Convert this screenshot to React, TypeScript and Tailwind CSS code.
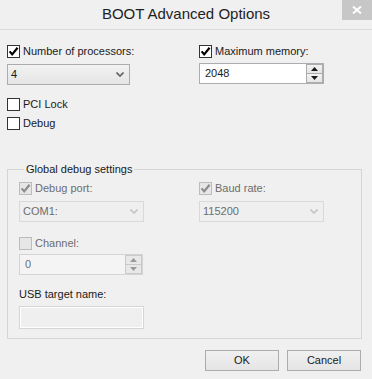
import React from "react";

function Box({ checked, disabled }: { checked?: boolean; disabled?: boolean }) {
  return (
    <span
      className={
        disabled
          ? "w-[13px] h-[13px] border border-[#bcbcbc] bg-[#e6e6e6] flex items-center justify-center shrink-0"
          : "w-[13px] h-[13px] border border-[#333333] bg-white flex items-center justify-center shrink-0"
      }
    >
      {checked && (
        <svg width="11" height="11" viewBox="0 0 11 11">
          <path
            d="M1.6 5.4 L4.2 8.4 L9.6 1.8"
            fill="none"
            stroke={disabled ? "#8c8c8c" : "#000"}
            strokeWidth="2.2"
          />
        </svg>
      )}
    </span>
  );
}

function CheckRow({ label, checked, disabled }: { label: string; checked?: boolean; disabled?: boolean }) {
  return (
    <div className="flex items-center gap-[3px] h-[13px]">
      <Box checked={checked} disabled={disabled} />
      <span className={disabled ? "text-[#6d6d6d] leading-[13px]" : "text-[#1a1a1a] leading-[13px]"}>{label}</span>
    </div>
  );
}

function Chevron({ color }: { color: string }) {
  return (
    <svg width="8" height="5" viewBox="0 0 8 5">
      <path d="M0.5 0.5 L4 4 L7.5 0.5" fill="none" stroke={color} strokeWidth="1.6" />
    </svg>
  );
}

function Select({ value, disabled, width }: { value: string; disabled?: boolean; width: string }) {
  return (
    <div
      className={
        (disabled
          ? "border-[#d9d9d9] bg-[#efefef] text-[#6d6d6d] "
          : "border-[#acacac] bg-gradient-to-b from-[#f2f2f2] to-[#e5e5e5] text-[#1a1a1a] ") +
        "h-[21px] border flex items-center justify-between pl-[3px] pr-[5px] " +
        width
      }
    >
      <span className="leading-[13px]">{value}</span>
      <Chevron color={disabled ? "#c4c4c4" : "#606060"} />
    </div>
  );
}

function Tri({ up, color }: { up?: boolean; color: string }) {
  return (
    <svg width="7" height="4" viewBox="0 0 7 4">
      <path d={up ? "M0 4 L3.5 0 L7 4 Z" : "M0 0 L3.5 4 L7 0 Z"} fill={color} />
    </svg>
  );
}

function Spin({ value, disabled, width }: { value: string; disabled?: boolean; width: string }) {
  return (
    <div
      className={
        (disabled ? "border-[#d4d4d4] bg-[#f4f4f4] text-[#6d6d6d] " : "border-[#abadb3] bg-white text-[#1a1a1a] ") +
        "h-[21px] border flex items-center justify-between " +
        width
      }
    >
      <span className="pl-[5px] leading-[13px]">{value}</span>
      <div className="flex flex-col h-full w-[17px]">
        <div
          className={
            disabled
              ? "flex-1 border border-[#c9c9c9] bg-[#e8e8e8] flex items-center justify-center"
              : "flex-1 border border-[#acacac] bg-gradient-to-b from-[#f2f2f2] to-[#e5e5e5] flex items-center justify-center"
          }
        >
          <Tri up color={disabled ? "#9a9a9a" : "#1a1a1a"} />
        </div>
        <div
          className={
            disabled
              ? "flex-1 border border-t-0 border-[#c9c9c9] bg-[#e8e8e8] flex items-center justify-center"
              : "flex-1 border border-t-0 border-[#acacac] bg-gradient-to-b from-[#f2f2f2] to-[#e5e5e5] flex items-center justify-center"
          }
        >
          <Tri color={disabled ? "#9a9a9a" : "#1a1a1a"} />
        </div>
      </div>
    </div>
  );
}

function Button({ label }: { label: string }) {
  return (
    <button className="w-[74px] h-[21px] border border-[#acacac] bg-gradient-to-b from-[#f0f0f0] to-[#e5e5e5] text-[#1a1a1a] leading-[13px] flex items-center justify-center">
      {label}
    </button>
  );
}

export default function App() {
  return (
    <div className="w-[372px] h-[379px] bg-[#f0f0f0] flex flex-col text-[11px] font-['Liberation_Sans',Arial,sans-serif] text-[#1a1a1a] overflow-hidden">
      <div className="h-[30px] relative flex items-center justify-center border-b border-[#dadada] shrink-0">
        <span className="text-[15px] text-[#1e1e1e] leading-[18px] pb-[1px]">BOOT Advanced Options</span>
        <div className="absolute top-0 right-0 w-[30px] h-[20px] bg-[#c7c7c7] flex items-center justify-center">
          <svg width="10" height="8" viewBox="0 0 10 8">
            <path d="M1 0.5 L9 7.5 M9 0.5 L1 7.5" stroke="#fff" strokeWidth="2" />
          </svg>
        </div>
      </div>

      <div className="flex flex-col px-[7px]">
        <div className="flex mt-[15px]">
          <div className="w-[192px] flex flex-col">
            <CheckRow label="Number of processors:" checked />
            <div className="mt-[6px]">
              <Select value="4" width="w-[123px]" />
            </div>
            <div className="mt-[13px]">
              <CheckRow label="PCI Lock" />
            </div>
            <div className="mt-[6px]">
              <CheckRow label="Debug" />
            </div>
          </div>
          <div className="flex flex-col">
            <CheckRow label="Maximum memory:" checked />
            <div className="mt-[5px]">
              <Spin value="2048" width="w-[125px]" />
            </div>
          </div>
        </div>

        <fieldset className="mt-[32px] w-[355px] border border-[#d5d5d5] px-[11px] pb-[9px]">
          <legend className="ml-[5px] px-[2px] leading-[14px] text-[#1a1a1a]">Global debug settings</legend>
          <div className="flex mt-[6px]">
            <div className="w-[180px] flex flex-col">
              <CheckRow label="Debug port:" checked disabled />
              <div className="mt-[6px]">
                <Select value="COM1:" disabled width="w-[125px]" />
              </div>
              <div className="mt-[15px]">
                <CheckRow label="Channel:" disabled />
              </div>
              <div className="mt-[4px]">
                <Spin value="0" disabled width="w-[124px]" />
              </div>
              <div className="mt-[13px] leading-[13px] text-[#1a1a1a]">USB target name:</div>
              <div className="mt-[5px] w-[125px] h-[23px] border border-[#d5d5d5] bg-[#efefef] shadow-[inset_0_0_0_1px_#ffffff]" />
            </div>
            <div className="flex flex-col">
              <CheckRow label="Baud rate:" checked disabled />
              <div className="mt-[6px]">
                <Select value="115200" disabled width="w-[125px]" />
              </div>
            </div>
          </div>
        </fieldset>

        <div className="flex justify-end gap-[8px] mt-[11px] pr-[4px]">
          <Button label="OK" />
          <Button label="Cancel" />
        </div>
      </div>
    </div>
  );
}
